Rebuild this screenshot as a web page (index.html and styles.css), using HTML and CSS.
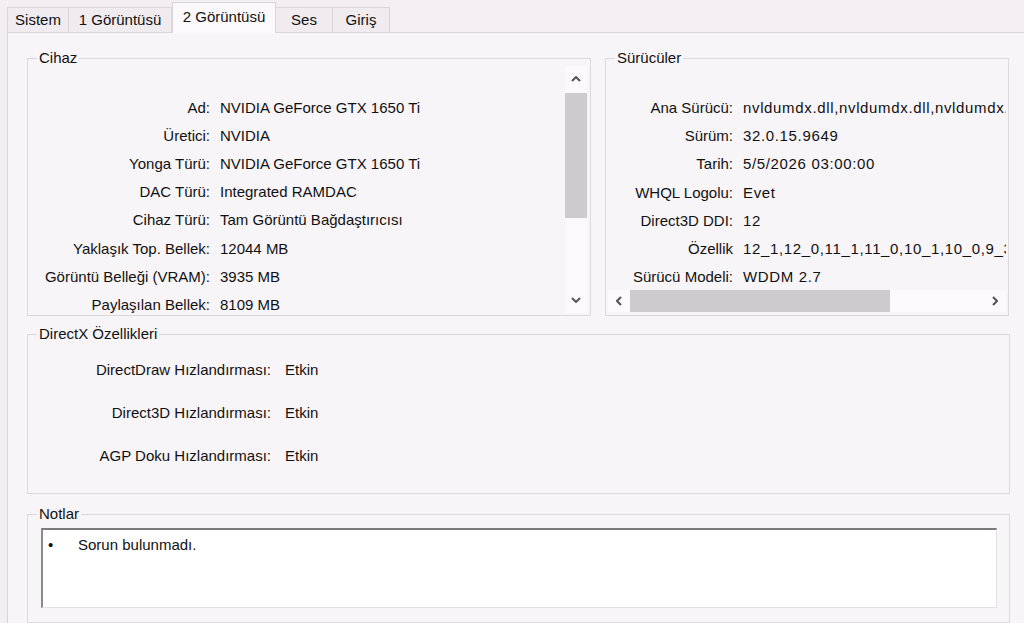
FILE: index.html
```html
<!DOCTYPE html>
<html lang="tr">
<head>
    <meta charset="UTF-8">
    <meta name="viewport" content="width=device-width, initial-scale=1.0">
    <title>DirectX Tanılama Aracı</title>
    <link rel="stylesheet" href="styles.css">
</head>
<body>
    <div class="tabs">
        <div class="tab tab-sistem">Sistem</div>
        <div class="tab tab-disp">1 Görüntüsü</div>
        <div class="tab tab-disp active">2 Görüntüsü</div>
        <div class="tab tab-ses">Ses</div>
        <div class="tab tab-giris">Giriş</div>
    </div>

    <div class="panel">
        <div class="top-row">
            <fieldset class="group device">
                <legend>Cihaz</legend>
                <div class="scroll-v">
                    <div class="list device-list">
                        <div class="row"><span class="lbl">Ad:</span><span class="val">NVIDIA GeForce GTX 1650 Ti</span></div>
                        <div class="row"><span class="lbl">Üretici:</span><span class="val">NVIDIA</span></div>
                        <div class="row"><span class="lbl">Yonga Türü:</span><span class="val">NVIDIA GeForce GTX 1650 Ti</span></div>
                        <div class="row"><span class="lbl">DAC Türü:</span><span class="val">Integrated RAMDAC</span></div>
                        <div class="row"><span class="lbl">Cihaz Türü:</span><span class="val">Tam Görüntü Bağdaştırıcısı</span></div>
                        <div class="row"><span class="lbl">Yaklaşık Top. Bellek:</span><span class="val">12044 MB</span></div>
                        <div class="row"><span class="lbl">Görüntü Belleği (VRAM):</span><span class="val">3935 MB</span></div>
                        <div class="row"><span class="lbl">Paylaşılan Bellek:</span><span class="val">8109 MB</span></div>
                    </div>
                    <div class="vbar">
                        <div class="arrow-btn">
                            <svg width="10" height="6" viewBox="0 0 10 6"><path d="M1 5 L5 1 L9 5" fill="none" stroke="#555" stroke-width="2"/></svg>
                        </div>
                        <div class="vtrack"><div class="vthumb"></div></div>
                        <div class="arrow-btn">
                            <svg width="10" height="6" viewBox="0 0 10 6"><path d="M1 1 L5 5 L9 1" fill="none" stroke="#555" stroke-width="2"/></svg>
                        </div>
                    </div>
                </div>
            </fieldset>

            <fieldset class="group drivers">
                <legend>Sürücüler</legend>
                <div class="scroll-h">
                    <div class="list drivers-list">
                        <div class="row"><span class="lbl">Ana Sürücü:</span><span class="val">nvldumdx.dll,nvldumdx.dll,nvldumdx.dll,nvldumdx.dll</span></div>
                        <div class="row"><span class="lbl">Sürüm:</span><span class="val">32.0.15.9649</span></div>
                        <div class="row"><span class="lbl">Tarih:</span><span class="val">5/5/2026 03:00:00</span></div>
                        <div class="row"><span class="lbl">WHQL Logolu:</span><span class="val">Evet</span></div>
                        <div class="row"><span class="lbl">Direct3D DDI:</span><span class="val">12</span></div>
                        <div class="row"><span class="lbl">Özellik</span><span class="val">12_1,12_0,11_1,11_0,10_1,10_0,9_3,9_2,9_1</span></div>
                        <div class="row"><span class="lbl">Sürücü Modeli:</span><span class="val">WDDM 2.7</span></div>
                    </div>
                    <div class="hbar">
                        <div class="arrow-btn side">
                            <svg width="6" height="10" viewBox="0 0 6 10"><path d="M5 1 L1 5 L5 9" fill="none" stroke="#555" stroke-width="2"/></svg>
                        </div>
                        <div class="htrack"><div class="hthumb"></div></div>
                        <div class="arrow-btn side">
                            <svg width="6" height="10" viewBox="0 0 6 10"><path d="M1 1 L5 5 L1 9" fill="none" stroke="#555" stroke-width="2"/></svg>
                        </div>
                    </div>
                </div>
            </fieldset>
        </div>

        <fieldset class="group features">
            <legend>DirectX Özellikleri</legend>
            <div class="list features-list">
                <div class="row"><span class="lbl">DirectDraw Hızlandırması:</span><span class="val">Etkin</span></div>
                <div class="row"><span class="lbl">Direct3D Hızlandırması:</span><span class="val">Etkin</span></div>
                <div class="row"><span class="lbl">AGP Doku Hızlandırması:</span><span class="val">Etkin</span></div>
            </div>
        </fieldset>

        <fieldset class="group notes">
            <legend>Notlar</legend>
            <div class="notes-box">
                <div class="note"><span class="bullet">•</span><span>Sorun bulunmadı.</span></div>
            </div>
        </fieldset>
    </div>
</body>
</html>
```

FILE: styles.css
```css
body {
    margin: 0;
    height: 100vh;
    overflow: hidden;
    background: #f2eef2;
    font-family: "Liberation Sans", Arial, sans-serif;
    font-size: 15px;
    color: #111;
}

/* tab strip */
.tabs {
    display: flex;
    align-items: flex-end;
    height: 32px;
    margin-left: 7px;
}
.tab {
    box-sizing: border-box;
    height: 25px;
    line-height: 24px;
    text-align: center;
    background: #efebef;
    border: 1px solid #d9d6d9;
    border-bottom: none;
    border-left: none;
}
.tab-sistem {
    width: 62px;
    border-left: 1px solid #d9d6d9;
}
.tab-disp {
    width: 103px;
}
.tab-ses {
    width: 57px;
}
.tab-giris {
    width: 57px;
}
.tab.active {
    position: relative;
    z-index: 1;
    width: 104px;
    height: 31px;
    line-height: 27px;
    margin-bottom: -1px;
    background: #fbf9fb;
    border-left: 1px solid #d9d6d9;
}

.panel {
    box-sizing: border-box;
    height: calc(100vh - 32px);
    margin-left: 7px;
    padding: 17px 14px 0 19px;
    background: #f8f5f8;
    border-top: 1px solid #d9d6d9;
    border-left: 1px solid #d9d6d9;
}

/* group boxes */
.group {
    box-sizing: border-box;
    margin: 0;
    padding: 0 2px 2px 2px;
    border: 1px solid #dcd9dc;
    min-width: 0;
}
.group legend {
    margin-left: 7px;
    padding: 0 2px;
    line-height: 16px;
}

.top-row {
    display: flex;
    gap: 14px;
}
.device {
    width: 564px;
    height: 266px;
}
.drivers {
    width: 404px;
    height: 266px;
}

.row {
    display: grid;
    align-items: center;
    column-gap: 10px;
    height: 28.2px;
    white-space: nowrap;
}
.lbl {
    text-align: right;
}
.val {
    overflow: hidden;
}

.scroll-v {
    display: flex;
    height: 247px;
}
.device-list {
    flex: 1;
    padding-top: 27px;
}
.device-list .row {
    grid-template-columns: 180px 1fr;
}

.vbar {
    display: flex;
    flex-direction: column;
    width: 22px;
    margin-right: 1px;
    background: #fbf9fb;
}
.arrow-btn {
    display: flex;
    align-items: center;
    justify-content: center;
    height: 26px;
}
.vtrack {
    flex: 1;
}
.vthumb {
    height: 125px;
    margin-top: 1px;
    background: #cdcbcd;
}

.scroll-h {
    display: flex;
    flex-direction: column;
    height: 246px;
}
.drivers-list {
    flex: 1;
    overflow: hidden;
    padding-top: 27.5px;
}
.drivers-list .row {
    grid-template-columns: 125px 1fr;
}
.drivers-list .val {
    overflow: visible;
    letter-spacing: 0.65px;
}

.hbar {
    display: flex;
    height: 22px;
    background: #fbf9fb;
}
.arrow-btn.side {
    width: 22px;
    height: 22px;
}
.htrack {
    flex: 1;
}
.hthumb {
    width: 260px;
    height: 100%;
    background: #cdcbcd;
}

.features {
    margin-top: 10px;
    height: 168px;
}
.features-list {
    padding-top: 6px;
}
.features-list .row {
    grid-template-columns: 241px 1fr;
    column-gap: 14px;
    height: 43px;
}

.notes {
    margin-top: 12px;
    height: 117px;
}
.notes-box {
    box-sizing: border-box;
    height: 80px;
    margin: 6px 10px 0 11px;
    padding-top: 7px;
    background: #fff;
    border-top: 2px solid #7c7a7c;
    border-left: 2px solid #8c8a8c;
    border-right: 1px solid #e3e0e3;
    border-bottom: 1px solid #e3e0e3;
}
.note {
    display: flex;
    line-height: 16px;
}
.bullet {
    width: 35px;
    padding-left: 5px;
    box-sizing: border-box;
}
```
